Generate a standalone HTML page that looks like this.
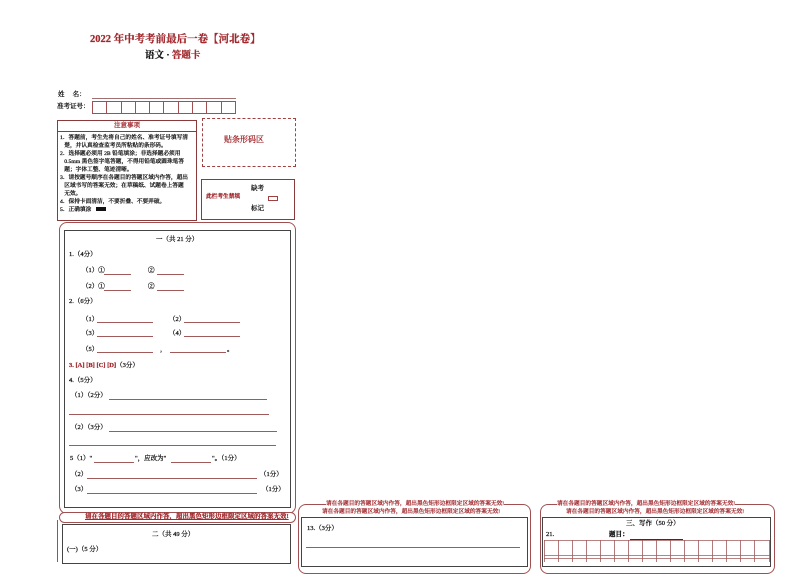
<!DOCTYPE html>
<html><head><meta charset="utf-8"><style>
body{margin:0;width:794px;height:562px;background:#fff;position:relative;overflow:hidden;font-family:"Liberation Serif","Noto Serif CJK SC","Noto Sans CJK SC",serif;color:#111}
.a{position:absolute;white-space:nowrap;line-height:1;-webkit-text-stroke:0.25px currentColor}
.r{color:#a0282d}
.s7{font-size:7px}.s6{font-size:6.5px}.s5{font-size:5.7px}
.ln{position:absolute;height:0;border-top:1px solid #a05a5a}
.box{position:absolute;box-sizing:border-box}
</style></head><body>
<div class="a r" style="left:90px;top:35px;font-size:10.5px;font-weight:bold">2022 年中考考前最后一卷【河北卷】</div>
<div class="a" style="left:145px;top:52px;font-size:9.5px;font-weight:bold">语文 · <span class="r">答题卡</span></div>

<div class="a s6" style="left:58px;top:92px">姓&nbsp;&nbsp;&nbsp;&nbsp;&nbsp;名：</div>
<div class="ln" style="left:92px;top:98px;width:144px;border-color:#a07070"></div>
<div class="a s6" style="left:57px;top:104px">准考证号：</div>
<div class="box" style="left:92px;top:101px;width:144px;height:13px;border:1px solid #a05050;display:flex">
<div style="flex:1;border-right:1px solid #a05050"></div><div style="flex:1;border-right:1px solid #a05050"></div><div style="flex:1;border-right:1px solid #a05050"></div><div style="flex:1;border-right:1px solid #a05050"></div><div style="flex:1;border-right:1px solid #a05050"></div><div style="flex:1;border-right:1px solid #a05050"></div><div style="flex:1;border-right:1px solid #a05050"></div><div style="flex:1;border-right:1px solid #a05050"></div><div style="flex:1;border-right:1px solid #a05050"></div><div style="flex:1"></div></div>

<div class="box" style="left:57px;top:120px;width:140px;height:101px;border:1px solid #8a3a3a"></div>
<div class="ln" style="left:57px;top:131px;width:140px;border-color:#8a3a3a"></div>
<div class="a r s6" style="left:114px;top:123px">注意事项</div>
<div class="a s5" style="left:60px;top:134px;line-height:8px">1．答题前，考生先将自己的姓名、准考证号填写清<br>&nbsp;&nbsp;&nbsp;楚，并认真检查监考员所粘贴的条形码。<br>2．选择题必须用 2B 铅笔填涂；非选择题必须用<br>&nbsp;&nbsp;&nbsp;0.5mm 黑色签字笔答题，不得用铅笔或圆珠笔答<br>&nbsp;&nbsp;&nbsp;题；字体工整、笔迹清晰。<br>3．请按题号顺序在各题目的答题区域内作答，超出<br>&nbsp;&nbsp;&nbsp;区域书写的答案无效；在草稿纸、试题卷上答题<br>&nbsp;&nbsp;&nbsp;无效。<br>4．保持卡面清洁，不要折叠、不要弄破。<br>5．正确填涂&nbsp;&nbsp;&nbsp;<span style="display:inline-block;width:10px;height:4px;background:#111"></span></div>

<div class="box" style="left:202px;top:118px;width:94px;height:49px;border:1px dashed #a04040"></div>
<div class="a r" style="left:224px;top:136px;font-size:8px">贴条形码区</div>
<div class="box" style="left:201px;top:179px;width:94px;height:41px;border:1px solid #8a3a3a"></div>
<div class="a s6" style="left:251px;top:186px">缺考</div>
<div class="a r s5" style="left:206px;top:195px;font-weight:bold">此栏考生禁填</div>
<div class="box" style="left:268px;top:196px;width:10px;height:5px;border:1px solid #a04040"></div>
<div class="a s6" style="left:251px;top:206px">标记</div>

<div class="box" style="left:59px;top:222px;width:237px;height:292px;border:1px solid #a05050;border-radius:8px"></div>
<div class="box" style="left:64px;top:230px;width:227px;height:278px;border:1px solid #444"></div>
<div class="a s6" style="left:156px;top:237px">一（共 21 分）</div>
<div class="a s6" style="left:69px;top:252px">1.（4分）</div>
<div class="a s6" style="left:82px;top:268px">（1）①</div><div class="ln" style="left:104px;top:274px;width:27px"></div>
<div class="a s6" style="left:148px;top:268px">②</div><div class="ln" style="left:157px;top:274px;width:27px"></div>
<div class="a s6" style="left:82px;top:284px">（2）①</div><div class="ln" style="left:104px;top:290px;width:27px"></div>
<div class="a s6" style="left:148px;top:284px">②</div><div class="ln" style="left:157px;top:290px;width:27px"></div>
<div class="a s6" style="left:69px;top:299px">2.（6分）</div>
<div class="a s6" style="left:82px;top:317px">（1）</div><div class="ln" style="left:97px;top:322px;width:56px"></div>
<div class="a s6" style="left:169px;top:317px">（2）</div><div class="ln" style="left:184px;top:322px;width:56px"></div>
<div class="a s6" style="left:82px;top:331px">（3）</div><div class="ln" style="left:97px;top:336px;width:56px"></div>
<div class="a s6" style="left:169px;top:331px">（4）</div><div class="ln" style="left:184px;top:336px;width:56px"></div>
<div class="a s6" style="left:82px;top:347px">（5）</div><div class="ln" style="left:97px;top:352px;width:56px"></div>
<div class="a s6" style="left:160px;top:347px">，</div><div class="ln" style="left:170px;top:352px;width:56px"></div><div class="a s6" style="left:227px;top:347px">。</div>
<div class="a s6" style="left:69px;top:363px"><span class="r" style="font-weight:bold">3. [A] [B] [C] [D]</span>（3分）</div>
<div class="a s6" style="left:69px;top:378px">4.（5分）</div>
<div class="a s6" style="left:71px;top:393px">（1）（2分）</div><div class="ln" style="left:109px;top:399px;width:158px"></div>
<div class="ln" style="left:69px;top:414px;width:200px"></div>
<div class="a s6" style="left:71px;top:425px">（2）（3分）</div><div class="ln" style="left:109px;top:431px;width:168px"></div>
<div class="ln" style="left:69px;top:445px;width:207px"></div>
<div class="a s6" style="left:70px;top:456px">5（1）"</div><div class="ln" style="left:94px;top:462px;width:40px"></div>
<div class="a s6" style="left:135px;top:456px">"，应改为"</div><div class="ln" style="left:171px;top:462px;width:40px"></div>
<div class="a s6" style="left:212px;top:456px">"。（1分）</div>
<div class="a s6" style="left:71px;top:472px">（2）</div><div class="ln" style="left:87px;top:478px;width:170px"></div><div class="a s6" style="left:260px;top:472px">（1分）</div>
<div class="a s6" style="left:71px;top:487px">（3）</div><div class="ln" style="left:87px;top:493px;width:170px"></div><div class="a s6" style="left:262px;top:487px">（1分）</div>

<div class="box" style="left:59px;top:512px;width:237px;height:11px;border:1px solid #a05050;border-radius:6px;background:#fff"></div>
<div class="a r s6" style="left:85px;top:514px;font-weight:bold;text-decoration:underline">请在各题目的答题区域内作答，超出黑色矩形边框限定区域的答案无效!</div>
<div class="box" style="left:57px;top:520px;width:2px;height:42px;border-left:1px solid #a05050"></div>
<div class="box" style="left:62px;top:524px;width:229px;height:40px;border:1px solid #444"></div>
<div class="a s6" style="left:152px;top:532px">二（共 49 分）</div>
<div class="a s6" style="left:67px;top:547px">(一)（5 分）</div>

<div class="box" style="left:298px;top:504px;width:233px;height:70px;border:1px solid #a05050;border-radius:8px"></div>
<div class="a r s5" style="left:326px;top:502px;background:#fff">请在各题目的答题区域内作答，超出黑色矩形边框限定区域的答案无效!</div>
<div class="a r s5" style="left:322px;top:510px">请在各题目的答题区域内作答，超出黑色矩形边框限定区域的答案无效!</div>
<div class="box" style="left:301px;top:517px;width:227px;height:50px;border:1px solid #444;background:#fff"></div>
<div class="a s6" style="left:307px;top:526px">13.（3分）</div>
<div class="ln" style="left:306px;top:547px;width:214px"></div>

<div class="box" style="left:540px;top:504px;width:235px;height:70px;border:1px solid #a05050;border-radius:8px"></div>
<div class="a r s5" style="left:557px;top:502px;background:#fff">请在各题目的答题区域内作答，超出黑色矩形边框限定区域的答案无效!</div>
<div class="a r s5" style="left:566px;top:510px">请在各题目的答题区域内作答，超出黑色矩形边框限定区域的答案无效!</div>
<div class="box" style="left:542px;top:517px;width:229px;height:50px;border:1px solid #444;background:#fff"></div>
<div class="a s6" style="left:626px;top:521px">三、写作（50 分）</div>
<div class="a s6" style="left:546px;top:532px">21.</div>
<div class="a s6" style="left:609px;top:532px;font-weight:bold">题目：</div>
<div class="ln" style="left:630px;top:539px;width:53px;border-color:#333"></div>
<svg class="box" style="left:544px;top:540px" width="226" height="22">
<g stroke="#a05a5a" stroke-width="0.8" fill="none">
<line x1="0" y1="0.5" x2="226" y2="0.5"/><line x1="0" y1="15.5" x2="226" y2="15.5"/><line x1="0" y1="18.5" x2="226" y2="18.5"/>
<path d="M0.5 0V22M14.5 0V22M28.5 0V22M42.5 0V22M56.5 0V22M70.5 0V22M84.5 0V22M98.5 0V22M112.5 0V22M126.5 0V22M140.5 0V22M154.5 0V22M168.5 0V22M182.5 0V22M196.5 0V22M210.5 0V22M225.5 0V22"/>
</g></svg>
</body></html>
